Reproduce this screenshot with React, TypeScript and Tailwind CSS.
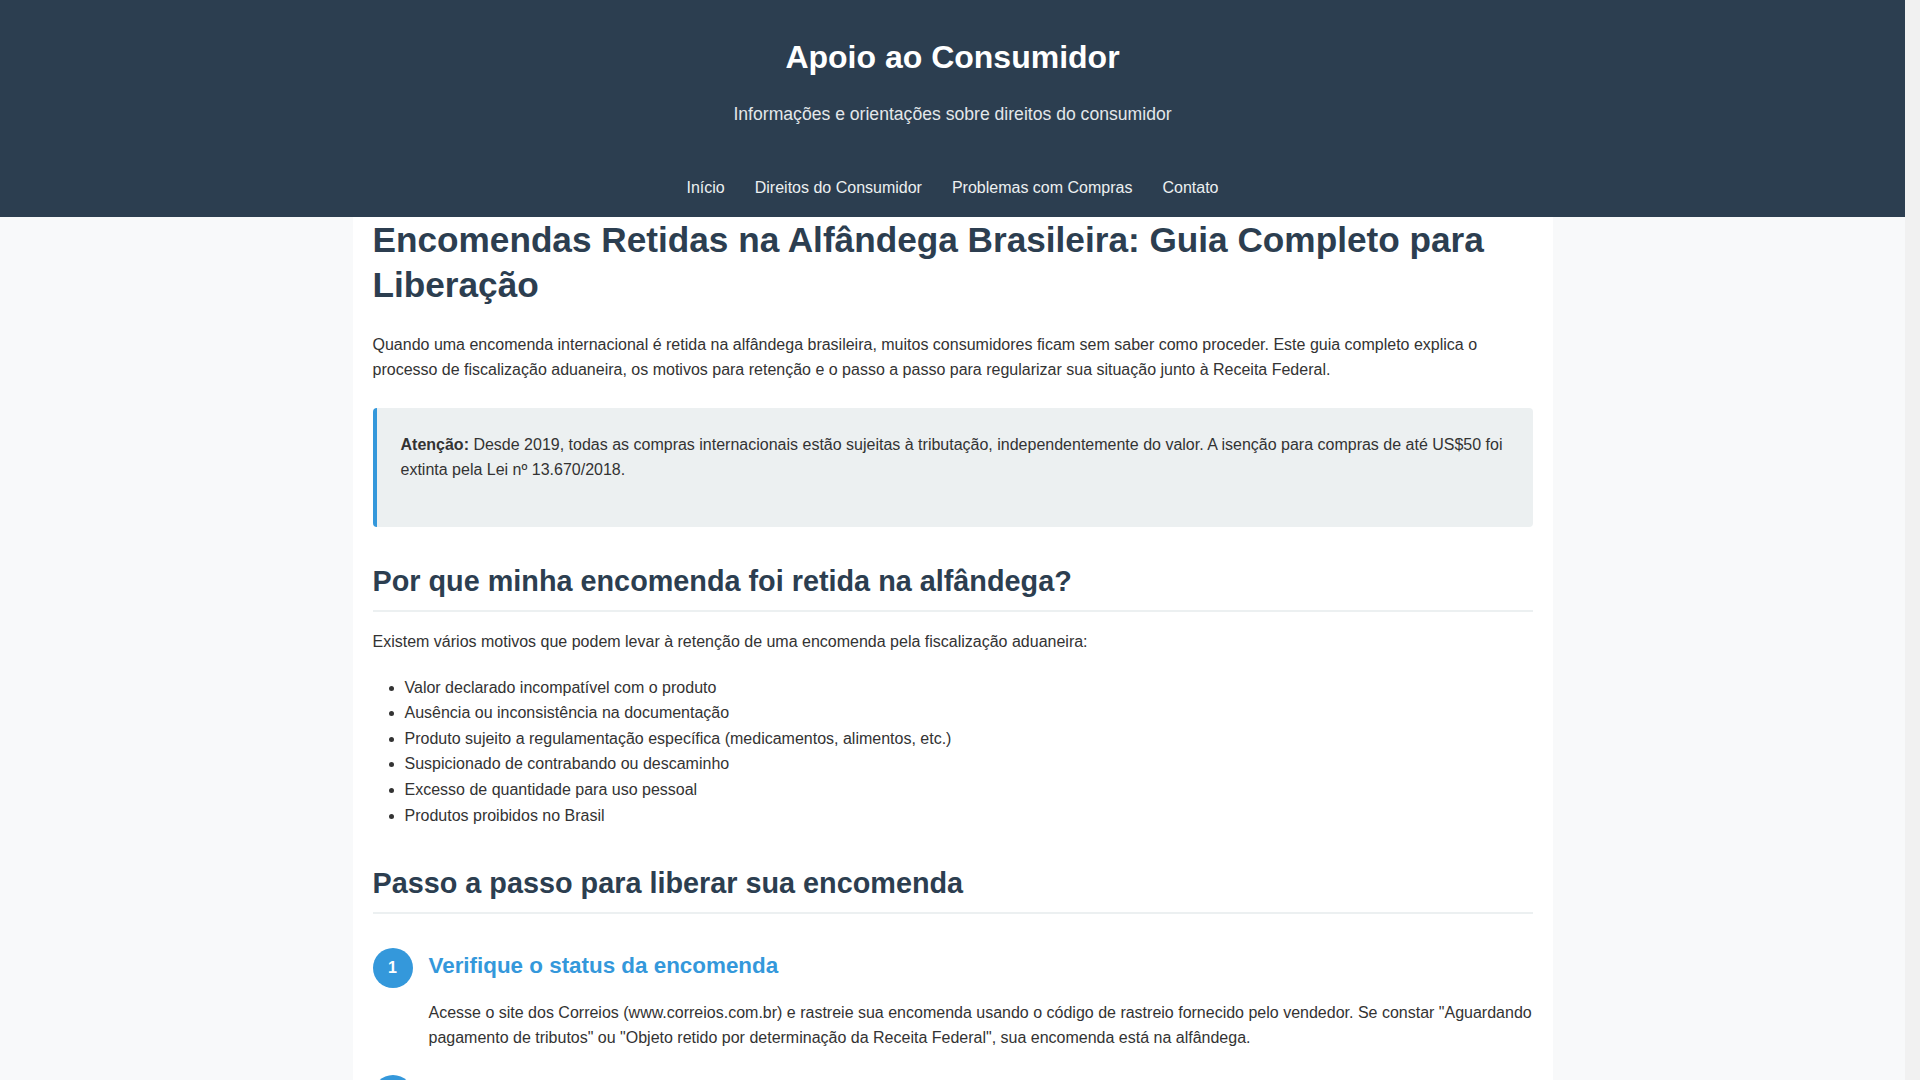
const navLinks = ["Início", "Direitos do Consumidor", "Problemas com Compras", "Contato"];

const motivos = [
  "Valor declarado incompatível com o produto",
  "Ausência ou inconsistência na documentação",
  "Produto sujeito a regulamentação específica (medicamentos, alimentos, etc.)",
  "Suspicionado de contrabando ou descaminho",
  "Excesso de quantidade para uso pessoal",
  "Produtos proibidos no Brasil",
];

const passos = [
  {
    title: "Verifique o status da encomenda",
    text: 'Acesse o site dos Correios (www.correios.com.br) e rastreie sua encomenda usando o código de rastreio fornecido pelo vendedor. Se constar "Aguardando pagamento de tributos" ou "Objeto retido por determinação da Receita Federal", sua encomenda está na alfândega.',
  },
  {
    title: "Acesse o sistema Minhas Importações",
    text: "Entre no portal dos Correios com seu CPF e senha para consultar os valores de impostos e as pendências da sua encomenda.",
  },
  {
    title: "Pague os tributos ou apresente documentos",
    text: "Efetue o pagamento do Imposto de Importação e do ICMS, ou envie a documentação solicitada pela Receita Federal dentro do prazo indicado.",
  },
];

function Step({ n, title, text }: { n: number; title: string; text: string }) {
  return (
    <div className="flex items-start gap-4">
      <div className="w-10 h-10 shrink-0 rounded-full bg-[#3498db] text-white font-bold flex items-center justify-center">
        {n}
      </div>
      <div className="min-w-0 flex-1">
        <h3 className="mt-[3px] mb-[19.7px] text-[22.4px] leading-[1.3] font-bold text-[#3498db]">{title}</h3>
        <p>{text}</p>
      </div>
    </div>
  );
}

export default function App() {
  return (
    <div className="flex min-h-screen bg-[#f8f9fa] font-['Liberation_Sans',Arial,sans-serif] text-base leading-[1.6] text-[#333]">
      <div className="flex-1 min-w-0">
        {/* Header */}
        <header className="bg-[#2c3e50] text-white text-center pt-[32px] pb-[15.7px]">
          <h1 className="text-[32px] leading-[51.2px] font-bold">Apoio ao Consumidor</h1>
          <p className="mt-[16.4px] text-[17.6px] leading-[1.6] text-[#e3e7ea]">
            Informações e orientações sobre direitos do consumidor
          </p>
          <nav className="mt-[47.6px] flex justify-center gap-[30px]">
            {navLinks.map((l) => (
              <a key={l} href="#" className="text-[#ecf0f1]">
                {l}
              </a>
            ))}
          </nav>
        </header>

        {/* Article */}
        <main className="max-w-[1200px] mx-auto bg-white px-5 pb-10">
          <h1 className="text-[35.2px] leading-[1.3] font-bold text-[#2c3e50] mb-[23.6px]">
            Encomendas Retidas na Alfândega Brasileira: Guia Completo para Liberação
          </h1>
          <p>
            Quando uma encomenda internacional é retida na alfândega brasileira, muitos consumidores ficam sem saber como
            proceder. Este guia completo explica o processo de fiscalização aduaneira, os motivos para retenção e o passo
            a passo para regularizar sua situação junto à Receita Federal.
          </p>

          <div className="mt-[25px] border-l-4 border-[#3498db] bg-[#ecf0f1] rounded-[4px] pt-6 pb-[43.5px] px-6">
            <p>
              <strong className="font-bold">Atenção:</strong> Desde 2019, todas as compras internacionais estão sujeitas
              à tributação, independentemente do valor. A isenção para compras de até US$50 foi extinta pela Lei nº
              13.670/2018.
            </p>
          </div>

          <h2 className="mt-[36.4px] pb-[10px] border-b-2 border-[#ecf0f1] text-[28.8px] leading-[1.3] font-bold text-[#2c3e50]">
            Por que minha encomenda foi retida na alfândega?
          </h2>
          <p className="mt-[17px]">
            Existem vários motivos que podem levar à retenção de uma encomenda pela fiscalização aduaneira:
          </p>
          <ul className="mt-[19.7px] list-disc pl-8">
            {motivos.map((m) => (
              <li key={m}>{m}</li>
            ))}
          </ul>

          <h2 className="mt-[36.8px] pb-[10px] border-b-2 border-[#ecf0f1] text-[28.8px] leading-[1.3] font-bold text-[#2c3e50]">
            Passo a passo para liberar sua encomenda
          </h2>
          <div className="mt-[33.4px] flex flex-col gap-[24.5px]">
            {passos.map((p, i) => (
              <Step key={p.title} n={i + 1} title={p.title} text={p.text} />
            ))}
          </div>
        </main>
      </div>
      {/* scrollbar track */}
      <div className="sticky top-0 h-screen w-[15px] shrink-0 bg-[#f1f1f1]" />
    </div>
  );
}
